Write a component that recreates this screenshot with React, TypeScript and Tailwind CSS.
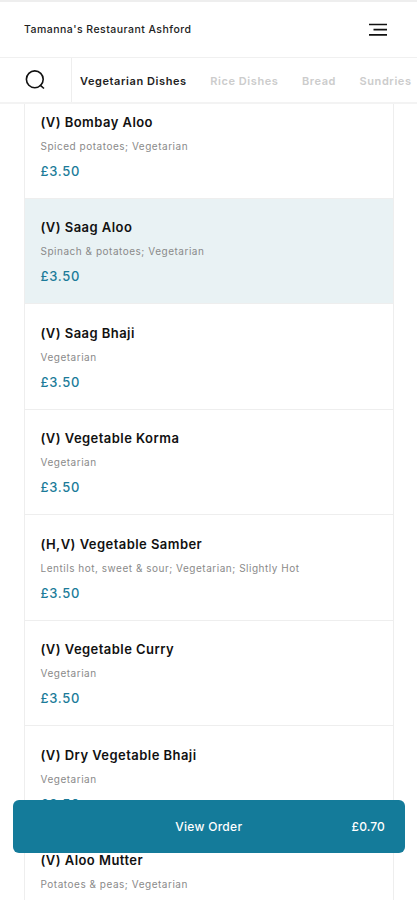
type MenuItem = {
  name: string;
  description: string;
  price: string;
  selected?: boolean;
};

const categories = ["Vegetarian Dishes", "Rice Dishes", "Bread", "Sundries"];

const menuItems: MenuItem[] = [
  { name: "(V) Bombay Aloo", description: "Spiced potatoes; Vegetarian", price: "£3.50" },
  { name: "(V) Saag Aloo", description: "Spinach & potatoes; Vegetarian", price: "£3.50", selected: true },
  { name: "(V) Saag Bhaji", description: "Vegetarian", price: "£3.50" },
  { name: "(V) Vegetable Korma", description: "Vegetarian", price: "£3.50" },
  { name: "(H,V) Vegetable Samber", description: "Lentils hot, sweet & sour; Vegetarian; Slightly Hot", price: "£3.50" },
  { name: "(V) Vegetable Curry", description: "Vegetarian", price: "£3.50" },
  { name: "(V) Dry Vegetable Bhaji", description: "Vegetarian", price: "£3.50" },
  { name: "(V) Aloo Mutter", description: "Potatoes & peas; Vegetarian", price: "£3.50" },
];

function MenuIcon() {
  return (
    <svg width="18" height="14" viewBox="0 0 18 14" fill="none" stroke="#111111" strokeWidth="1.7">
      <path d="M0 1.5h18M4.5 6.6h13.5M0 11.8h18" />
    </svg>
  );
}

function SearchIcon() {
  return (
    <svg width="20" height="20" viewBox="0 0 20 20" fill="none" stroke="#111111" strokeWidth="1.6">
      <circle cx="9.8" cy="9.3" r="8.4" />
      <path d="M14.8 14.8l4.2 3.7" />
    </svg>
  );
}

export default function App() {
  return (
    <div className="relative flex h-[900px] w-full flex-col overflow-hidden bg-white font-['Inter',sans-serif]">
      <header className="flex h-[58px] shrink-0 items-center justify-between border-t-2 border-b border-t-[#eeeeee] border-b-[#f0f0f0] pr-[30px] pl-6">
        <h1 className="text-[10.5px] font-medium tracking-[0.47px] text-[#222222]">Tamanna's Restaurant Ashford</h1>
        <button type="button" aria-label="Menu">
          <MenuIcon />
        </button>
      </header>

      <nav className="flex h-[46px] shrink-0 border-b-2 border-[#f3f3f3]">
        <button type="button" aria-label="Search" className="flex w-[72px] shrink-0 items-center border-r border-[#eeeeee] pl-[25px]">
          <SearchIcon />
        </button>
        <div className="flex items-center gap-[23.5px] pt-[2px] pl-2 text-[11px] font-semibold tracking-[0.58px] whitespace-nowrap">
          {categories.map((category, index) => (
            <span key={category} className={index === 0 ? "text-[#222222]" : "text-[#cccccc]"}>
              {category}
            </span>
          ))}
        </div>
      </nav>

      <main className="min-h-0 flex-1 overflow-hidden px-6">
        <ul className="-mt-[11px] w-[370px] border-x border-[#eeeeee]">
          {menuItems.map((item) => (
            <li
              key={item.name}
              className={`h-[105.5px] border-b border-[#eeeeee] pt-[18.6px] pl-[15.5px] ${item.selected ? "bg-[#e9f2f4]" : "bg-white"}`}
            >
              <h2 className="text-[13px] leading-5 font-semibold tracking-[0.45px] text-[#111111]">{item.name}</h2>
              <p className="mt-[6px] text-[10px] leading-4 tracking-[0.52px] text-[#8a8a8a]">{item.description}</p>
              <p className="mt-[9px] text-[13px] leading-4 font-medium tracking-[0.7px] text-[#1b7b99]">{item.price}</p>
            </li>
          ))}
        </ul>
      </main>

      <button
        type="button"
        className="absolute right-3 bottom-[47px] left-[12.5px] flex h-[53px] items-center justify-center rounded-[6px] bg-[#147b9a] text-[12px] font-medium tracking-[0.3px] text-white"
      >
        <span>View Order</span>
        <span className="absolute right-5 tracking-[0.15px]">£0.70</span>
      </button>
    </div>
  );
}
